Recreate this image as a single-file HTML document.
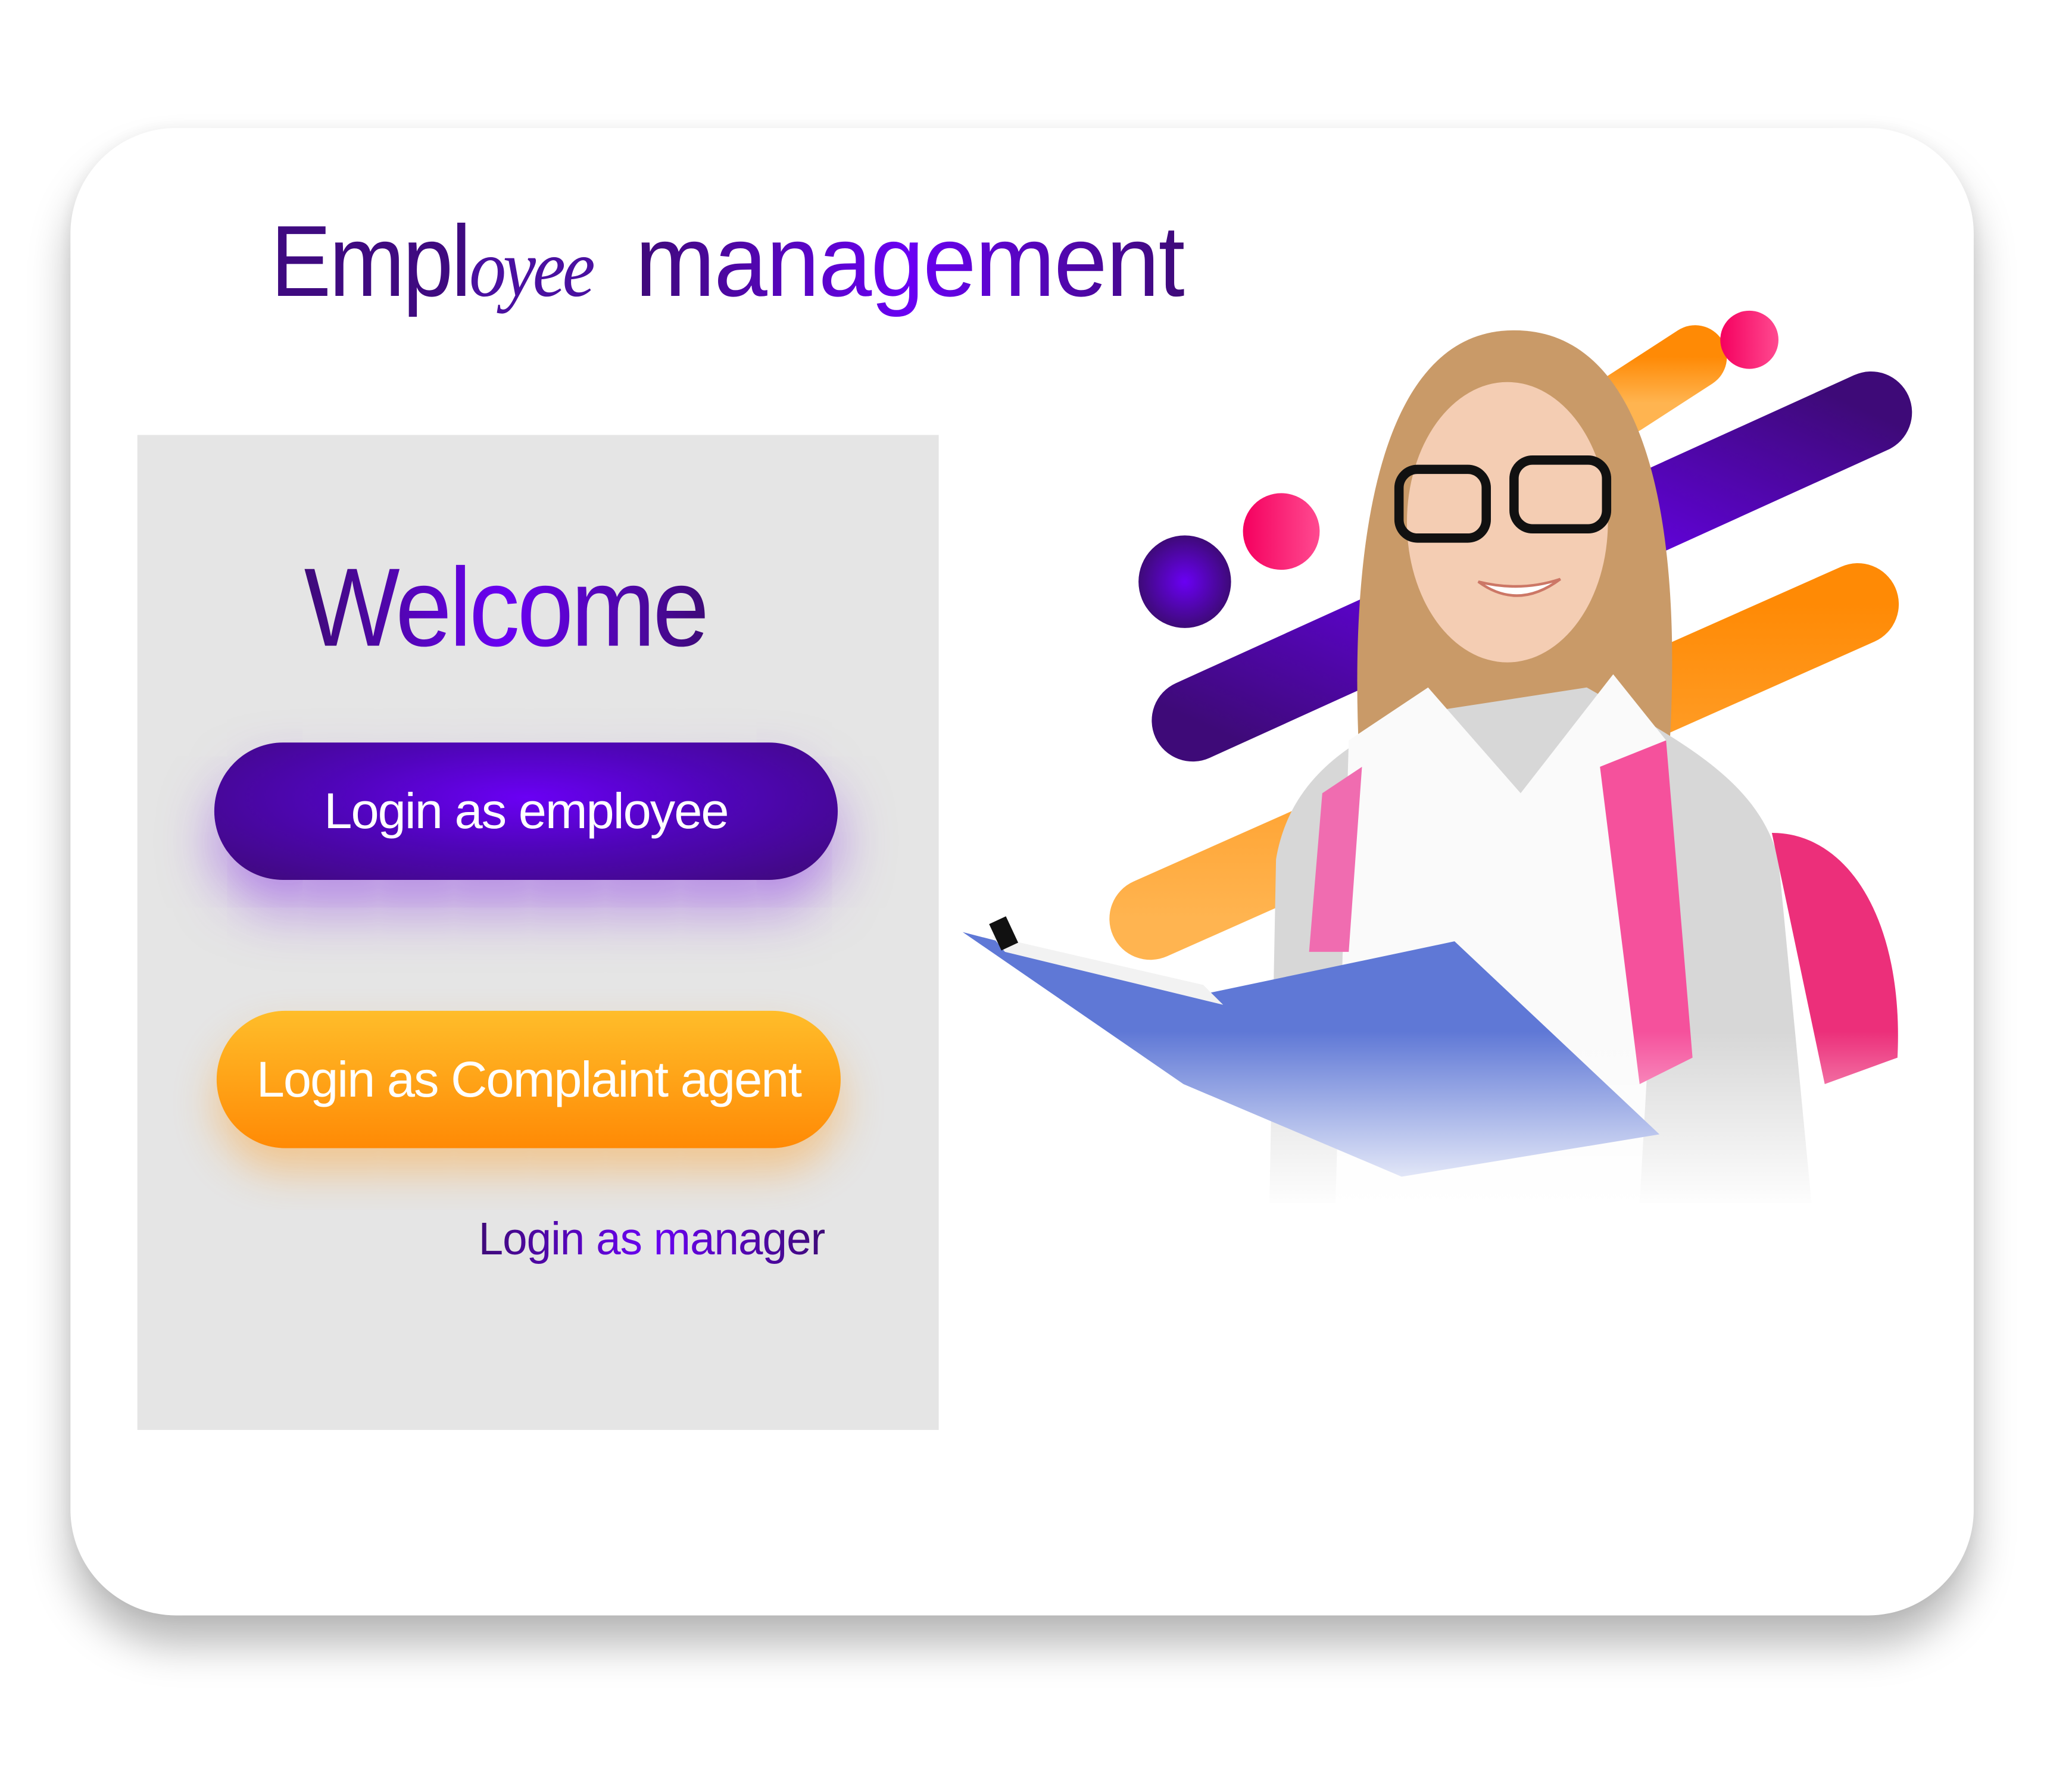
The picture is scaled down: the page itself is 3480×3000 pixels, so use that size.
<!DOCTYPE html>
<html><head><meta charset="utf-8"><style>
html,body{margin:0;padding:0;background:#fff;}
body{width:3480px;height:3000px;position:relative;overflow:hidden;font-family:"Liberation Sans",sans-serif;}
#w{position:absolute;left:0;top:0;width:3480px;height:3000px;transform:scale(0.986);transform-origin:0 0;}
.card{position:absolute;left:120px;top:218px;width:3242px;height:2534px;border-radius:180px;background:#fff;box-shadow:0 50px 70px rgba(0,0,0,.28),0 0 30px rgba(0,0,0,.06);}
.grad{background:linear-gradient(90deg,#3e0a78,#6a00f4 50%,#3e0a78);-webkit-background-clip:text;background-clip:text;color:transparent;}
.t{position:absolute;white-space:nowrap;transform-origin:0 0;}
.panel{position:absolute;left:234px;top:741px;width:1365px;height:1695px;background:#e5e5e5;}
.btn{position:absolute;border-radius:120px;color:#fff;text-align:center;font-size:86px;letter-spacing:-2px;}
</style></head><body><div id="w">
<div class="card"></div>
<div class="t" style="left:461px;top:345px;font-size:172px;line-height:200px;color:#3f0a80;letter-spacing:-4px;transform:scaleX(.9);">Empl<span style="font-family:'Liberation Serif',serif;font-style:italic;font-size:140px;color:#4a10a0;letter-spacing:-6px;">oyee</span></div>
<div class="t grad" style="left:1082px;top:345px;font-size:172px;line-height:200px;letter-spacing:-2px;transform:scaleX(.95);">management</div>
<div class="panel"></div>
<div class="t grad" style="left:518px;top:935px;font-size:190px;line-height:200px;letter-spacing:-5px;transform:scaleX(.91);">Welcome</div>
<div class="btn" style="left:365px;top:1265px;width:1062px;height:234px;line-height:234px;background:radial-gradient(ellipse at 50% 40%,#6a00f4 0%,#4f05b8 45%,#3e0a78 100%);box-shadow:0 50px 90px rgba(140,60,230,.55);">Login as employee</div>
<div class="btn" style="left:369px;top:1722px;width:1063px;height:234px;line-height:234px;background:linear-gradient(180deg,#ffbd2a,#ff8a05);box-shadow:0 40px 70px rgba(255,160,40,.45);">Login as Complaint agent</div>
<div class="t grad" style="left:815px;top:2065px;font-size:78px;line-height:90px;letter-spacing:-1px;transform:scaleX(.97);">Login as manager</div>
<svg style="position:absolute;left:0;top:0" width="3480" height="3000" viewBox="0 0 1545 1332">
<defs>
<linearGradient id="pu" x1="0" y1="1" x2="1" y2="0"><stop offset="0" stop-color="#3e0a78"/><stop offset=".5" stop-color="#6a00f4"/><stop offset="1" stop-color="#3e0a78"/></linearGradient>
<linearGradient id="or" x1="0" y1="0" x2="0" y2="1"><stop offset="0" stop-color="#ff8a05"/><stop offset="1" stop-color="#ffb450"/></linearGradient>
<radialGradient id="pd"><stop offset="0" stop-color="#6a00f4"/><stop offset="1" stop-color="#3e0a78"/></radialGradient>
<linearGradient id="pk" x1="0" x2="1"><stop offset="0" stop-color="#f5005f"/><stop offset="1" stop-color="#ff4a90"/></linearGradient>
<linearGradient id="fade" x1="0" y1="0" x2="0" y2="1"><stop offset="0" stop-color="#fff" stop-opacity="0"/><stop offset="1" stop-color="#fff" stop-opacity="1"/></linearGradient>
</defs>
<line x1="1228" y1="305" x2="1282" y2="270" stroke="url(#or)" stroke-width="48" stroke-linecap="round"/>
<circle cx="1323" cy="257" r="22" fill="url(#pk)"/>
<line x1="902" y1="545" x2="1415" y2="312" stroke="url(#pu)" stroke-width="62" stroke-linecap="round"/>
<line x1="870" y1="695" x2="1405" y2="457" stroke="url(#or)" stroke-width="62" stroke-linecap="round"/>
<circle cx="896" cy="440" r="35" fill="url(#pd)"/>
<circle cx="969" cy="402" r="29" fill="url(#pk)"/>
<path d="M1028 575 C1020 420 1040 255 1140 250 C1240 245 1275 380 1262 575 Z" fill="#c99a68"/>
<ellipse cx="1140" cy="395" rx="76" ry="106" fill="#f4cdb3"/>
<path d="M960 910 L965 650 C975 590 1020 560 1070 540 L1200 520 C1270 560 1330 590 1345 650 L1370 910 Z" fill="#d7d7d7"/>
<path d="M1020 560 L1080 520 L1150 600 L1220 510 L1260 560 L1240 910 L1010 910 Z" fill="#fafafa"/>
<path d="M1000 600 L1030 580 L1020 720 L990 720 Z" fill="#f06cb0"/>
<path d="M1210 580 L1260 560 L1280 800 L1240 820 Z" fill="#f5519c"/>
<path d="M1340 630 C1400 630 1440 700 1435 800 L1380 820 Z" fill="#ec2f7a"/>
<rect x="1058" y="355" width="66" height="52" rx="14" fill="none" stroke="#111" stroke-width="7"/>
<rect x="1145" y="348" width="70" height="52" rx="14" fill="none" stroke="#111" stroke-width="7"/>
<path d="M1118 440 Q1148 462 1180 438 Q1150 448 1118 440Z" fill="#fff" stroke="#c76" stroke-width="2"/>
<path d="M728 705 L910 752 L1100 712 L1255 858 L1060 890 L895 820 Z" fill="#5f78d6"/>
<path d="M750 708 L910 745 L925 760 L760 720 Z" fill="#f2f2f2"/>
<rect x="752" y="695" width="14" height="22" fill="#111" transform="rotate(-25 759 706)"/>
<rect x="720" y="780" width="740" height="135" fill="url(#fade)"/>
</svg>
</div></body></html>
